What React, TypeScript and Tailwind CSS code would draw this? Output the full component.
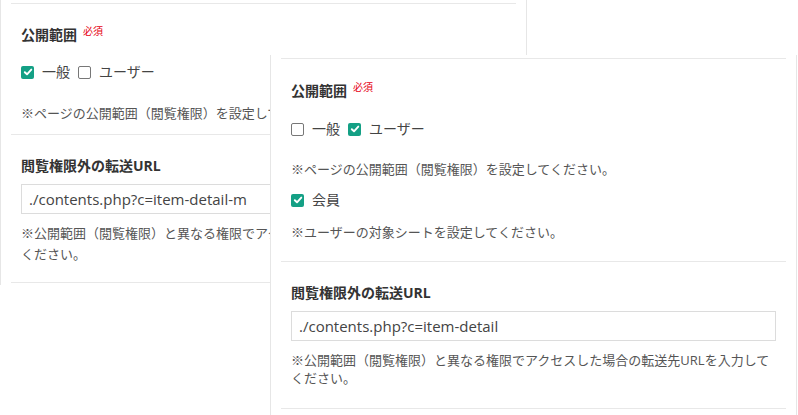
import type { ReactNode } from "react";

const jp = "font-['Open_Sans','Noto_Sans_CJK_JP',sans-serif]";

function Box({ checked }: { checked: boolean }) {
  if (checked) {
    return (
      <span className="inline-flex h-[13px] w-[13px] items-center justify-center rounded-[2px] bg-[#14a085]">
        <svg width="10" height="10" viewBox="0 0 10 10" fill="none">
          <path d="M1.8 5.2 4 7.3 8.3 2.6" stroke="#fff" strokeWidth="1.9" strokeLinecap="round" strokeLinejoin="round" />
        </svg>
      </span>
    );
  }
  return <span className="inline-block h-[13px] w-[13px] rounded-[2px] border border-[#777] bg-white" />;
}

function Check({ checked, label }: { checked: boolean; label: string }) {
  return (
    <label className="flex items-center gap-[8px] text-[14px] leading-[20px] text-[#444]">
      <Box checked={checked} />
      <span>{label}</span>
    </label>
  );
}

function Heading({ children, required }: { children: ReactNode; required?: boolean }) {
  return (
    <div className="flex items-start text-[14px] font-bold leading-[20px] text-[#333]">
      <span>{children}</span>
      {required && <span className="ml-[6px] -mt-[1px] text-[10px] font-normal leading-[14px] text-[#e60012]">必須</span>}
    </div>
  );
}

function Note({ children, className = "" }: { children: ReactNode; className?: string }) {
  return <p className={`text-[13px] text-[#555] ${className}`}>{children}</p>;
}

function UrlInput({ value }: { value: string }) {
  return (
    <div className="h-[30px] w-full border border-[#dcdcdc] bg-white px-[7px] text-[15px] leading-[28px] text-[#444] whitespace-nowrap overflow-hidden">
      {value}
    </div>
  );
}

function Panel({ className, children }: { className: string; children: ReactNode }) {
  return (
    <section className={`absolute w-[527px] overflow-hidden border-x border-[#e6e6e6] bg-white ${className}`}>
      <div className="mx-[10px] h-[4px] border-b border-[#e8e8e8]" />
      {children}
    </section>
  );
}

export default function App() {
  return (
    <div className={`relative h-[415px] w-[798px] overflow-hidden bg-white ${jp}`}>
      {/* 奥のパネル */}
      <Panel className="left-0 top-0 h-[285px]">
        <div className="mx-[10px] border-b border-[#e8e8e8] px-[10px] pt-[21px] pb-[11px]">
          <Heading required>公開範囲</Heading>
          <div className="mt-[17px] flex items-center gap-[8px]">
            <Check checked label="一般" />
            <Check checked={false} label="ユーザー" />
          </div>
          <Note className="mt-[21px] leading-[20px]">※ページの公開範囲（閲覧権限）を設定してください。</Note>
        </div>
        <div className="mx-[10px] border-b border-[#e8e8e8] px-[10px] pt-[21px] pb-[17px]">
          <Heading>閲覧権限外の転送URL</Heading>
          <div className="mt-[8px]">
            <UrlInput value="./contents.php?c=item-detail-m" />
          </div>
          <Note className="mt-[9px] leading-[21px]">
            ※公開範囲（閲覧権限）と異なる権限でアクセスした場合の転送先URLを入力して
            <br />
            ください。
          </Note>
        </div>
      </Panel>

      {/* 手前のパネル */}
      <Panel className="left-[270px] top-[55px] h-[370px]">
        <div className="mx-[10px] border-b border-[#e8e8e8] px-[10px] pt-[22px] pb-[19px]">
          <Heading required>公開範囲</Heading>
          <div className="mt-[18px] flex items-center gap-[8px]">
            <Check checked={false} label="一般" />
            <Check checked label="ユーザー" />
          </div>
          <Note className="mt-[20px] leading-[20px]">※ページの公開範囲（閲覧権限）を設定してください。</Note>
          <div className="mt-[11px]">
            <Check checked label="会員" />
          </div>
          <Note className="mt-[12px] leading-[20px]">※ユーザーの対象シートを設定してください。</Note>
        </div>
        <div className="mx-[10px] border-b border-[#e8e8e8] px-[10px] pt-[21px] pb-[21px]">
          <Heading>閲覧権限外の転送URL</Heading>
          <div className="mt-[8px]">
            <UrlInput value="./contents.php?c=item-detail" />
          </div>
          <Note className="mt-[10px] leading-[18px]">
            ※公開範囲（閲覧権限）と異なる権限でアクセスした場合の転送先URLを入力して
            <br />
            ください。
          </Note>
        </div>
      </Panel>
    </div>
  );
}
